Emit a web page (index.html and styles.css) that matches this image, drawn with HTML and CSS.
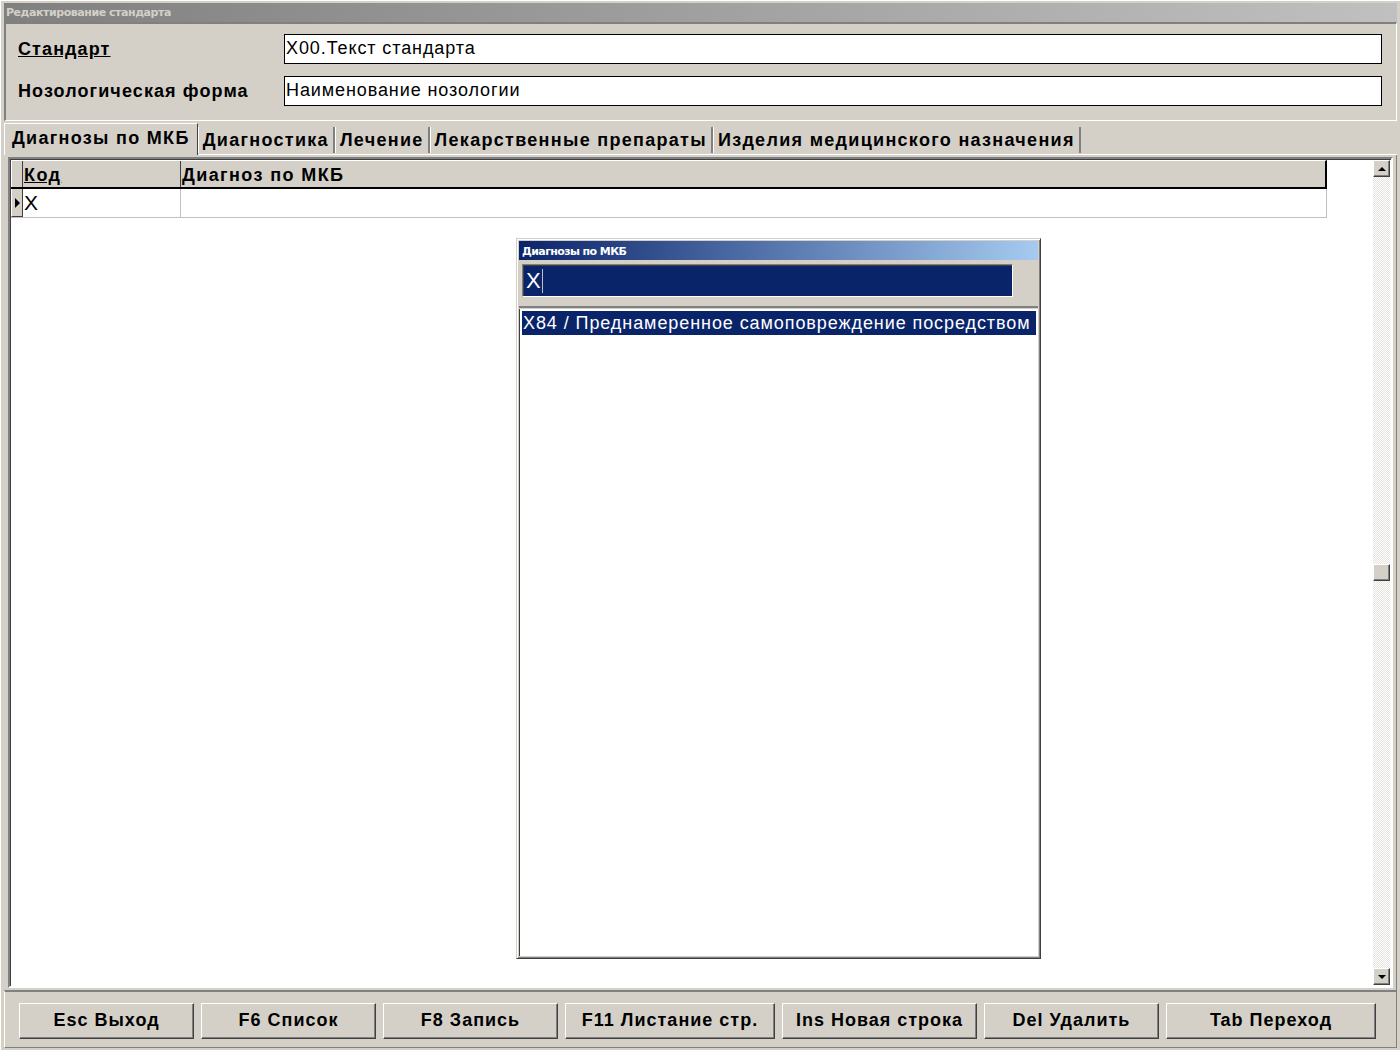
FILE: index.html
```html
<!DOCTYPE html>
<html>
  <head>
    <title>Редактирование стандарта</title>
    <link rel="stylesheet" href="styles.css">
  </head>
  <body>
    <div class="window">
      <div class="titlebar">Редактирование стандарта</div>

      <div class="head">
        <div class="field">
          <span class="label"><u>Стандарт</u></span>
          <div class="edit">X00.Текст стандарта</div>
        </div>
        <div class="field">
          <span class="label">Нозологическая форма</span>
          <div class="edit">Наименование нозологии</div>
        </div>
      </div>

      <div class="tabs">
        <div class="tab active">Диагнозы по МКБ</div>
        <div class="tab">Диагностика</div>
        <div class="tab">Лечение</div>
        <div class="tab">Лекарственные препараты</div>
        <div class="tab">Изделия медицинского назначения</div>
      </div>

      <div class="page">
        <div class="grid">
          <div class="grid-body">
            <div class="grid-head">
              <div class="ind"></div>
              <div class="col col-code"><u>Код</u></div>
              <div class="col col-name">Диагноз по МКБ</div>
            </div>
            <div class="grid-row">
              <div class="ind"><span class="arrow"></span></div>
              <div class="cell col-code">X</div>
              <div class="cell col-name"></div>
            </div>
          </div>
          <div class="scrollbar">
            <div class="sbtn"><span class="up"></span></div>
            <div class="track">
              <div class="thumb"></div>
            </div>
            <div class="sbtn"><span class="down"></span></div>
          </div>
        </div>
      </div>

      <div class="buttons">
        <div class="btn b1">Esc Выход</div>
        <div class="btn b1">F6 Список</div>
        <div class="btn b1">F8 Запись</div>
        <div class="btn b2">F11 Листание стр.</div>
        <div class="btn b3">Ins Новая строка</div>
        <div class="btn b1">Del Удалить</div>
        <div class="btn b4">Tab Переход</div>
      </div>
    </div>

    <div class="lookup">
      <div class="lookup-title">Диагнозы по МКБ</div>
      <div class="lookup-search">
        <div class="search-edit">X<span class="caret"></span></div>
      </div>
      <div class="lookup-list">
        <div class="item selected">X84 / Преднамеренное самоповреждение посредством</div>
      </div>
    </div>
  </body>
</html>
```

FILE: styles.css
```css
body {
  margin: 0;
  background: #d4d0c8;
  font-family: "Liberation Sans", Arial, sans-serif;
  color: #000;
}

.window {
  width: 1400px;
  height: 1050px;
  box-sizing: border-box;
  border-top: 1px solid #fff;
  border-left: 1px solid #fff;
  padding: 2px 3px 2px 3px;
  display: flex;
  flex-direction: column;
}

.titlebar {
  height: 19px;
  line-height: 20px;
  padding-left: 2px;
  background: linear-gradient(to right, #808080, #c0c0c0);
  color: #d4d0c8;
  font-size: 11px;
  font-weight: bold;
  font-family: "DejaVu Sans", sans-serif;
  letter-spacing: -0.45px;
}

.head {
  height: 99px;
  box-sizing: border-box;
  border-top: 2px solid #808080;
  border-left: 2px solid #808080;
  border-right: 1px solid #fff;
  border-bottom: 1px solid #fff;
  padding: 10px 14px 0 12px;
  display: flex;
  flex-direction: column;
  gap: 12px;
}

.field {
  display: flex;
  align-items: center;
  height: 30px;
}

.label {
  width: 266px;
  font-size: 18px;
  font-weight: bold;
  letter-spacing: 1.1px;
}

.edit {
  flex: 1;
  height: 30px;
  box-sizing: border-box;
  border: 1px solid #000;
  background: #fff;
  padding-left: 1px;
  line-height: 27px;
  font-size: 18px;
  letter-spacing: 0.9px;
}

.tabs {
  display: flex;
  align-items: flex-end;
  height: 33px;
  border-bottom: 1px solid #fff;
}

.tab {
  height: 26px;
  line-height: 26px;
  box-sizing: border-box;
  padding: 0 4px;
  border-left: 1px solid #fff;
  border-right: 2px solid #808080;
  font-size: 18px;
  font-weight: bold;
  letter-spacing: 1.3px;
  margin-bottom: 1px;
}

.tab.active {
  height: 32px;
  line-height: 29px;
  padding: 0 7px 0 7px;
  border-top: 1px solid #fff;
  margin-bottom: -1px;
  background: #d4d0c8;
  border-right: 1px solid #404040;
}

.page {
  flex: 1;
  padding: 2px 3px 2px 4px;
  border-right: 1px solid #808080;
}

.grid {
  height: 100%;
  box-sizing: border-box;
  border-top: 2px solid #808080;
  border-left: 2px solid #808080;
  border-right: 2px solid #fff;
  border-bottom: 2px solid #fff;
  box-shadow: inset 1px 1px #404040;
  background: #fff;
  display: flex;
  padding: 1px;
}

.grid-body {
  flex: 1;
}

.grid-head {
  display: flex;
  width: 1316px;
  height: 29px;
  box-sizing: border-box;
  background: #d4d0c8;
  border-bottom: 2px solid #000;
  border-right: 2px solid #000;
  border-top: 1px solid #fff;
}

.ind {
  width: 12px;
  box-sizing: border-box;
  border-right: 1px solid #404040;
  border-left: 1px solid #fff;
  background: #d4d0c8;
  display: flex;
  align-items: center;
  justify-content: center;
}

.col {
  font-size: 18px;
  font-weight: bold;
  letter-spacing: 1.4px;
  line-height: 28px;
  padding-left: 1px;
}

.col-code {
  width: 158px;
  box-sizing: border-box;
  border-right: 1px solid #404040;
}

.col-name {
  flex: 1;
}

.grid-row {
  display: flex;
  width: 1316px;
  height: 29px;
  box-sizing: border-box;
  border-bottom: 1px solid #c0c0c0;
  border-right: 1px solid #c0c0c0;
}

.grid-row .ind {
  border-bottom: 1px solid #404040;
}

.cell {
  font-size: 21px;
  line-height: 28px;
  padding-left: 1px;
}

.grid-row .col-code {
  border-right: 1px solid #c0c0c0;
}

.arrow {
  width: 0;
  height: 0;
  border-top: 5px solid transparent;
  border-bottom: 5px solid transparent;
  border-left: 5px solid #000;
  margin-left: 1px;
}

.scrollbar {
  width: 17px;
  display: flex;
  flex-direction: column;
}

.sbtn {
  height: 17px;
  box-sizing: border-box;
  background: #d4d0c8;
  border: 1px solid;
  border-color: #fff #404040 #404040 #fff;
  box-shadow: inset -1px -1px #808080;
  display: flex;
  align-items: center;
  justify-content: center;
}

.up {
  border-left: 4px solid transparent;
  border-right: 4px solid transparent;
  border-bottom: 4px solid #000;
}

.down {
  border-left: 4px solid transparent;
  border-right: 4px solid transparent;
  border-top: 4px solid #000;
}

.track {
  flex: 1;
  background: repeating-conic-gradient(#e6e3de 0 25%, #fff 0 50%) 0 0 / 2px 2px;
  display: flex;
  flex-direction: column;
  justify-content: center;
}

.thumb {
  height: 17px;
  box-sizing: border-box;
  background: #d4d0c8;
  border: 1px solid;
  border-color: #fff #404040 #404040 #fff;
  box-shadow: inset -1px -1px #808080;
}

.buttons {
  height: 58px;
  box-sizing: border-box;
  border-top: 2px solid #808080;
  border-left: 1px solid #fff;
  border-right: 1px solid #808080;
  border-bottom: 1px solid #808080;
  padding: 11px 0 0 14px;
  display: flex;
  gap: 7px;
}

.btn {
  height: 36px;
  box-sizing: border-box;
  border: 1px solid;
  border-color: #fff #404040 #404040 #fff;
  box-shadow: inset -1px -1px #808080;
  text-align: center;
  line-height: 33px;
  font-size: 18px;
  font-weight: bold;
  letter-spacing: 1px;
}

.b1 { width: 175px; }
.b2 { width: 210px; }
.b3 { width: 195px; }
.b4 { width: 210px; }

.lookup {
  position: absolute;
  left: 516px;
  top: 238px;
  width: 525px;
  height: 721px;
  box-sizing: border-box;
  background: #d4d0c8;
  border: 1px solid;
  border-color: #d4d0c8 #404040 #404040 #d4d0c8;
  box-shadow: inset 1px 1px #fff, inset -1px -1px #808080;
  padding: 2px;
  display: flex;
  flex-direction: column;
}

.lookup-title {
  height: 19px;
  line-height: 21px;
  padding-left: 3px;
  background: linear-gradient(to right, #0a246a, #a6caf0);
  color: #fff;
  font-size: 11px;
  font-weight: bold;
  font-family: "DejaVu Sans", sans-serif;
  letter-spacing: -0.6px;
}

.lookup-search {
  height: 48px;
  box-sizing: border-box;
  padding: 4px 25px 0 3px;
  border-bottom: 2px solid #808080;
}

.search-edit {
  height: 33px;
  box-sizing: border-box;
  border: 1px solid;
  border-color: #808080 #fff #fff #808080;
  box-shadow: inset 1px 1px #404040;
  background: #0a246a;
  color: #fff;
  font-size: 22px;
  line-height: 30px;
  padding-left: 3px;
  display: flex;
  align-items: center;
}

.caret {
  width: 1px;
  height: 24px;
  background: #c0c0c0;
  margin-left: 1px;
}

.lookup-list {
  flex: 1;
  background: #fff;
  border-left: 1px solid #404040;
  margin-top: 1px;
  padding: 2px 2px 0 2px;
}

.item {
  height: 24px;
  line-height: 25px;
  padding-left: 1px;
  font-size: 18px;
  letter-spacing: 0.92px;
  white-space: nowrap;
  overflow: hidden;
}

.item.selected {
  background: #0a246a;
  color: #fff;
}
```
